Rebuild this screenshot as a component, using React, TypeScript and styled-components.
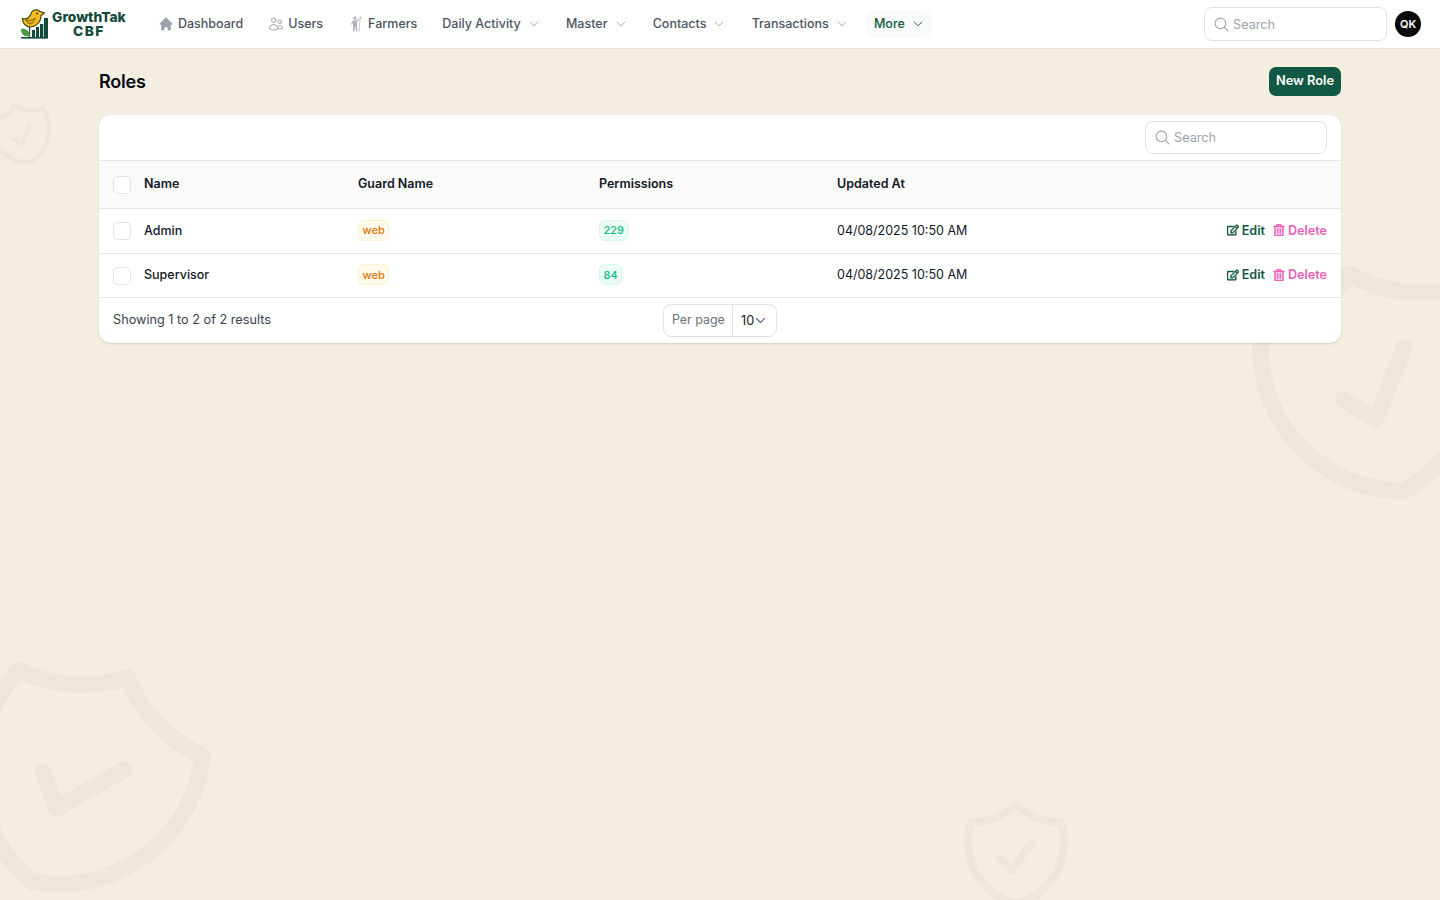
import styled, { createGlobalStyle } from "styled-components"
import { HiHome } from "react-icons/hi"
import { HiOutlineUsers, HiOutlineChevronDown, HiOutlineMagnifyingGlass } from "react-icons/hi2"
import { FaRegEdit, FaRegTrashAlt } from "react-icons/fa"

const GlobalStyle = createGlobalStyle`
  * {
    box-sizing: border-box;
  }
  html, body {
    margin: 0;
    height: 100%;
  }
  body {
    background: #f4eee1;
    font-family: Inter, "Liberation Sans", sans-serif;
    font-size: 12.5px;
    color: #111827;
  }
`

const Page = styled.div`
  position: relative;
  height: 900px;
  overflow: hidden;
`

const Shield = styled.svg<{ $size: number; $left: number; $top: number; $turn: number; $weight?: number }>`
  position: absolute;
  left: ${p => p.$left}px;
  top: ${p => p.$top}px;
  width: ${p => p.$size}px;
  height: ${p => p.$size}px;
  transform: rotate(${p => p.$turn}deg);
  fill: none;
  stroke: #ede6db;
  stroke-width: ${p => p.$weight ?? 1.5};
  stroke-linecap: round;
  stroke-linejoin: round;
`

const TopBar = styled.header`
  position: relative;
  display: flex;
  align-items: center;
  height: 49px;
  padding: 0 19px 0 20px;
  background: #fff;
  border-bottom: 1px solid #e7e1d2;
`

const Logo = styled.div`
  display: flex;
  align-items: center;
  gap: 4px;
  width: 130px;
`

const LogoText = styled.div`
  display: flex;
  flex-direction: column;
  align-items: center;
  color: #14493b;
  font-size: 13.8px;
  font-weight: 800;
  line-height: 14px;
`

const LogoSub = styled.span`
  letter-spacing: 1.4px;
`

const Nav = styled.nav`
  display: flex;
  align-items: center;
  gap: 9px;
`

const NavItem = styled.a<{ $active?: boolean }>`
  display: flex;
  align-items: center;
  gap: 4px;
  height: 28px;
  padding: ${p => (p.$active ? "0 8.5px 1px 8px" : "0 8px 1px")};
  border-radius: 8px;
  background: ${p => (p.$active ? "#f9fafb" : "transparent")};
  color: ${p => (p.$active ? "#14573f" : "#4b5563")};
  font-size: 12.5px;
  font-weight: 500;
  white-space: nowrap;
  svg {
    flex: none;
    width: 16px;
    height: 16px;
    color: #9ca3af;
  }
`

const Caret = styled(HiOutlineChevronDown)<{ $active?: boolean }>`
  && {
    width: 12px;
    height: 12px;
    margin-left: 3px;
    margin-right: ${p => (p.$active ? "0" : "1.2px")};
    color: ${p => (p.$active ? "#14573f" : "#9ca3af")};
    stroke-width: 1.8;
  }
`

const SearchBox = styled.label`
  display: flex;
  align-items: center;
  gap: 3px;
  width: 182px;
  height: 33px;
  padding: 0 8px;
  background: #fff;
  border: 1px solid #e2e2e4;
  border-radius: 8px;
  color: #9ca3af;
  font-size: 12.7px;
  svg {
    width: 17px;
    height: 17px;
  }
`

const TopSearch = styled(SearchBox)`
  width: 183px;
  height: 34px;
  margin-left: auto;
`

const Avatar = styled.div`
  display: flex;
  align-items: center;
  justify-content: center;
  width: 26px;
  height: 26px;
  margin-left: 8px;
  border-radius: 50%;
  background: #09090b;
  color: #fff;
  font-size: 11px;
  font-weight: 600;
`

const Main = styled.main`
  position: relative;
  padding: 18px 99px 0;
`

const Heading = styled.div`
  display: flex;
  align-items: center;
  justify-content: space-between;
  height: 29px;
  margin-bottom: 19px;
`

const Title = styled.h1`
  margin: 0;
  color: #030712;
  font-size: 18px;
  font-weight: 600;
  letter-spacing: -0.2px;
`

const NewButton = styled.button`
  width: 72px;
  height: 29px;
  padding: 0 0 2px;
  border: 0;
  border-radius: 7px;
  background: #135844;
  color: #fff;
  font: 600 12.8px Inter, sans-serif;
`

const Card = styled.section`
  background: #fff;
  border-radius: 12px;
  box-shadow: 0 1px 2px rgba(60, 50, 30, 0.18);
  overflow: hidden;
`

const Toolbar = styled.div`
  display: flex;
  justify-content: flex-end;
  align-items: center;
  height: 45px;
  padding: 0 14px;
`

const Row = styled.div<{ $head?: boolean; $height: number }>`
  display: grid;
  grid-template-columns: 31px 214px 241px 238px 200px 1fr;
  align-items: center;
  height: ${p => p.$height}px;
  padding: 0 0 2px 14px;
  border-top: 1px solid #e5e5e6;
  background: ${p => (p.$head ? "#fafafa" : "#fff")};
  color: #111827;
  font-size: 12.5px;
  font-weight: ${p => (p.$head ? 600 : 400)};
`

const NameCell = styled.div`
  font-weight: 500;
`

const Check = styled.span`
  display: block;
  width: 18px;
  height: 18px;
  border: 1px solid #e2e2e4;
  border-radius: 5px;
  background: #fff;
`

const CheckCell = styled.div`
  padding-top: 2px;
`

const Badge = styled.span<{ $tone: "amber" | "green" }>`
  display: inline-flex;
  align-items: center;
  height: 21px;
  padding: 0 3.5px;
  border-radius: 6px;
  border: 1px solid ${p => (p.$tone === "amber" ? "#fdf0cd" : "#d9f7ea")};
  background: ${p => (p.$tone === "amber" ? "#fffbeb" : "#ecfdf5")};
  color: ${p => (p.$tone === "amber" ? "#d97706" : "#10b981")};
  font-size: 11px;
  font-weight: 500;
`

const Actions = styled.div`
  display: flex;
  justify-content: flex-end;
  gap: 8px;
  padding-right: 14px;
`

const Action = styled.a<{ $danger?: boolean }>`
  display: flex;
  align-items: center;
  gap: 3px;
  color: ${p => (p.$danger ? "#ec5fb8" : "#14573f")};
  font-size: 12.6px;
  font-weight: 600;
  svg {
    width: 12px;
    height: 12px;
    stroke: currentColor;
    stroke-width: 22;
  }
`

const Footer = styled.div`
  display: grid;
  grid-template-columns: 1fr auto 1fr;
  align-items: center;
  height: 46px;
  padding: 0 14px;
  border-top: 1px solid #e5e5e6;
  color: #374151;
  font-size: 12.7px;
`

const Summary = styled.span`
  padding-bottom: 2px;
`

const PerPage = styled.div`
  display: flex;
  align-items: center;
  width: 114px;
  height: 33px;
  border: 1px solid #e2e2e4;
  border-radius: 8px;
`

const PerLabel = styled.span`
  display: flex;
  align-items: center;
  width: 69px;
  height: 100%;
  padding: 0 0 2px 8px;
  border-right: 1px solid #e2e2e4;
  color: #6b7280;
  font-size: 12.4px;
`

const PerValue = styled.span`
  display: flex;
  align-items: center;
  padding-left: 8px;
  color: #111827;
  svg {
    width: 13px;
    height: 13px;
    color: #4b5563;
    stroke-width: 2;
  }
`

function ShieldPaths() {
  return (
    <path d="M9 12.75 11.25 15 15 9.75m-3-7.036A11.959 11.959 0 0 1 3.598 6 11.99 11.99 0 0 0 3 9.749c0 5.592 3.824 10.29 9 11.623 5.176-1.332 9-6.03 9-11.622 0-1.31-.21-2.571-.598-3.751h-.152c-3.196 0-6.1-1.248-8.25-3.285Z" />
  )
}

function LogoMark() {
  return (
    <svg width="28" height="32" viewBox="0 0 28 32">
      <path d="M2.5 10.500C6 11.500 9.500 10 11 5.500C12 2 17 .5 20 3.500L24.500 5L21 7.500C21 14 16 19 10 19C5.500 19 2.500 15 2.500 10.500Z" fill="#f4bd1f" stroke="#3c3a14" strokeWidth="1.1" />
      <path d="M6 12c3 1 7 0 9-2 0 4-3 6-5 6-2 0-3-2-4-4Z" fill="#dd9f12" stroke="#3c3a14" strokeWidth=".6" />
      <circle cx="17" cy="5.500" r=".9" fill="#222" />
      <path d="M9.500 19v10" stroke="#14493b" strokeWidth="1.2" />
      <rect x="12" y="22" width="3" height="8" fill="#14493b" />
      <rect x="16" y="19" width="3" height="11" fill="#14493b" />
      <rect x="20" y="16" width="3.300" height="14" fill="#14493b" />
      <rect x="24" y="10" width="4" height="20" fill="#14493b" />
      <path d="M1 21c4-1 8 1 9 7-4 1-9 0-9-7Z" fill="#4f9a3c" />
      <rect x="1" y="29" width="27" height="1.600" fill="#14493b" />
    </svg>
  )
}

function FarmerIcon() {
  return (
    <svg viewBox="0 0 16 16" fill="#aeb3bb">
      <circle cx="7" cy="2.200" r="1.600" />
      <path d="M4.800 4.500h3.900l2.200-1.500.5.800-2.400 2.200v3.200l.5 6.300H8.200L7.200 10l-.9 5.500H4.900l.4-6.500-.6-2-1 1.800-.8-.5L4.800 4.500Z" />
      <path d="M12 .6l.6.100-1.200 14.800-.7-.1L12 .6Z" />
      <path d="M11.300 1l.5-.2.500 1.500 1-1.800.5.200-1.300 2.600h-.5L11.300 1Z" />
    </svg>
  )
}

const roles = [
  { name: "Admin", guard: "web", permissions: "229", updated: "04/08/2025 10:50 AM", height: 45 },
  { name: "Supervisor", guard: "web", permissions: "84", updated: "04/08/2025 10:50 AM", height: 44 },
]

export default function App() {
  return (
    <Page>
      <GlobalStyle />
      <Shield viewBox="0 0 24 24" $size={76} $left={-16} $top={96} $turn={-15}><ShieldPaths /></Shield>
      <Shield viewBox="0 0 24 24" $size={288} $left={1232} $top={238} $turn={-14} $weight={1.4}><ShieldPaths /></Shield>
      <Shield viewBox="0 0 24 24" $size={290} $left={-65} $top={634} $turn={25} $weight={1.4}><ShieldPaths /></Shield>
      <Shield viewBox="0 0 24 24" $size={128} $left={952} $top={790} $turn={0}><ShieldPaths /></Shield>

      <TopBar>
        <Logo>
          <LogoMark />
          <LogoText>
            <span>GrowthTak</span>
            <LogoSub>CBF</LogoSub>
          </LogoText>
        </Logo>
        <Nav>
          <NavItem><HiHome />Dashboard</NavItem>
          <NavItem><HiOutlineUsers />Users</NavItem>
          <NavItem><FarmerIcon />Farmers</NavItem>
          <NavItem>Daily Activity<Caret /></NavItem>
          <NavItem>Master<Caret /></NavItem>
          <NavItem>Contacts<Caret /></NavItem>
          <NavItem>Transactions<Caret /></NavItem>
          <NavItem $active>More<Caret $active /></NavItem>
        </Nav>
        <TopSearch><HiOutlineMagnifyingGlass />Search</TopSearch>
        <Avatar>QK</Avatar>
      </TopBar>

      <Main>
        <Heading>
          <Title>Roles</Title>
          <NewButton>New Role</NewButton>
        </Heading>
        <Card>
          <Toolbar>
            <SearchBox><HiOutlineMagnifyingGlass />Search</SearchBox>
          </Toolbar>
          <Row $head $height={48}>
            <CheckCell><Check /></CheckCell>
            <div>Name</div>
            <div>Guard Name</div>
            <div>Permissions</div>
            <div>Updated At</div>
          </Row>
          {roles.map(role => (
            <Row key={role.name} $height={role.height}>
              <CheckCell><Check /></CheckCell>
              <NameCell>{role.name}</NameCell>
              <div><Badge $tone="amber">{role.guard}</Badge></div>
              <div><Badge $tone="green">{role.permissions}</Badge></div>
              <div>{role.updated}</div>
              <Actions>
                <Action><FaRegEdit />Edit</Action>
                <Action $danger><FaRegTrashAlt />Delete</Action>
              </Actions>
            </Row>
          ))}
          <Footer>
            <Summary>Showing 1 to 2 of 2 results</Summary>
            <PerPage>
              <PerLabel>Per page</PerLabel>
              <PerValue>10<HiOutlineChevronDown /></PerValue>
            </PerPage>
          </Footer>
        </Card>
      </Main>
    </Page>
  )
}
